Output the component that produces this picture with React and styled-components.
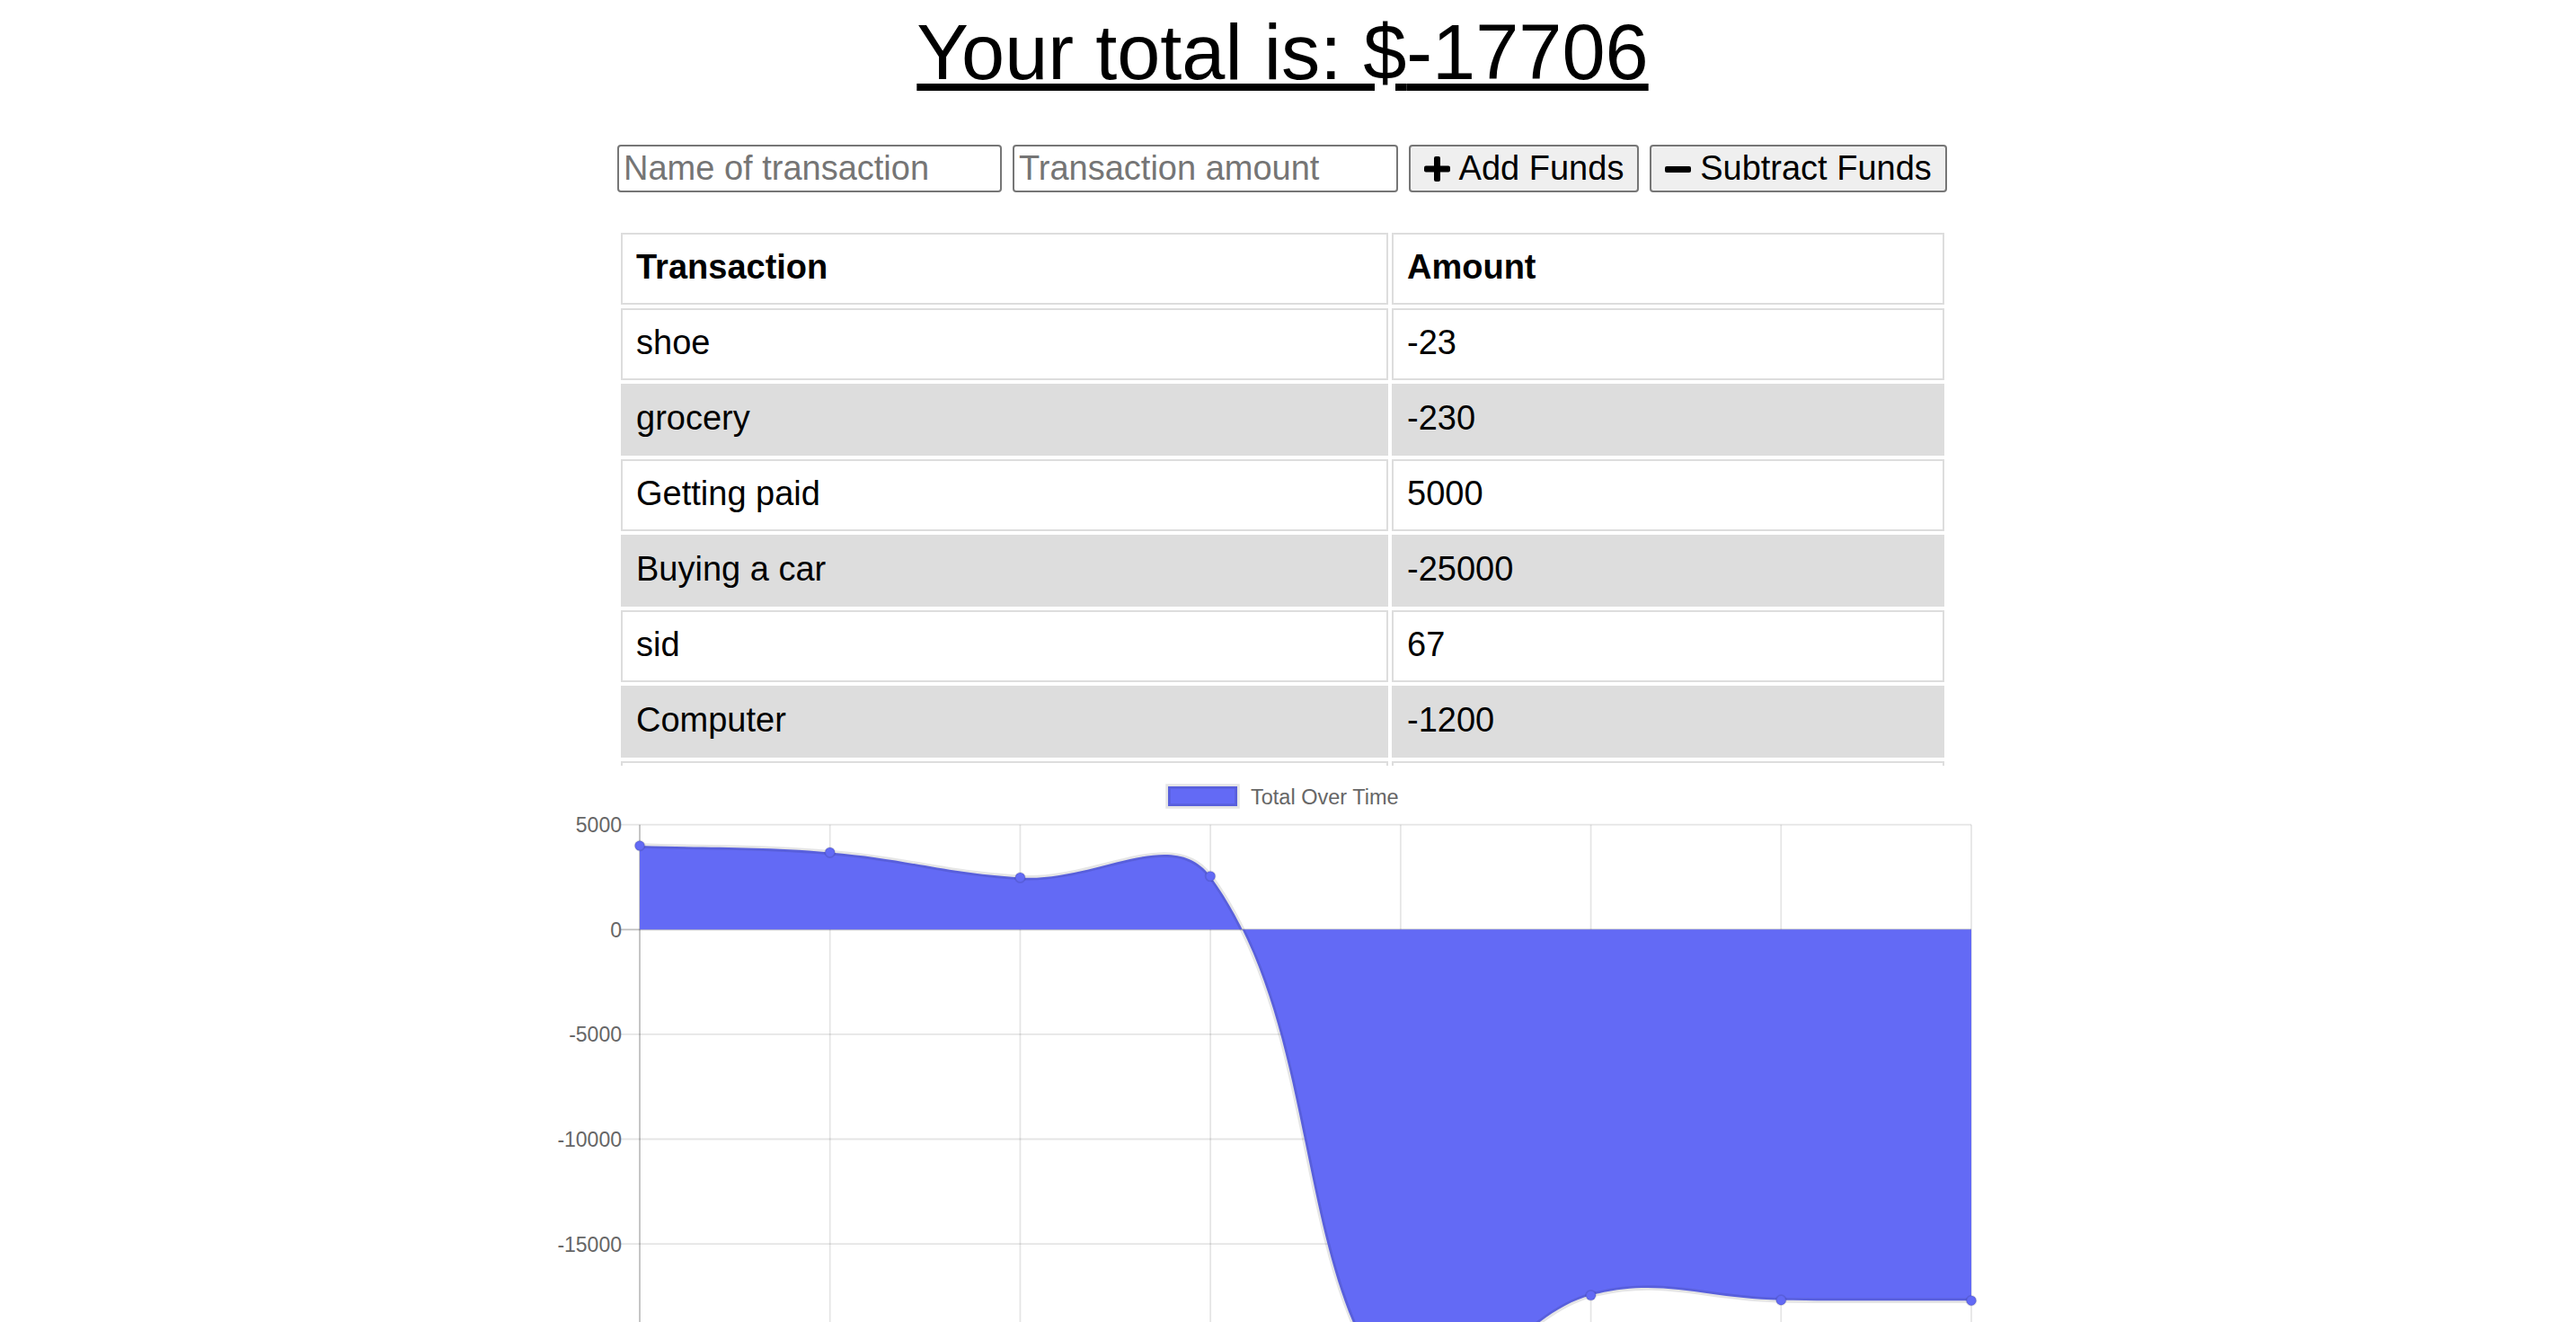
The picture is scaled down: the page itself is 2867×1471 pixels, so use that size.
import React from 'react'
import styled, { createGlobalStyle } from 'styled-components'

const GlobalStyle = createGlobalStyle`
  html,
  body {
    margin: 0;
    padding: 0;
    background: #fff;
  }
  body {
    font-family: "Liberation Sans", Arial, Helvetica, sans-serif;
    color: #000;
  }
`

const Page = styled.div`
  height: 100vh;
  overflow: hidden;
  box-sizing: border-box;
  /* the original had a scrollbar, so everything sits a bit left of centre */
  padding: 9px 12px 0 0;
  display: flex;
  flex-direction: column;
  align-items: center;
`
const Total = styled.h1`
  margin: 0;
  font-size: 86.5px;
  font-weight: normal;
  line-height: 98px;
  text-decoration: underline;
  white-space: nowrap;
`
const Form = styled.div`
  margin-top: 54px;
  width: 1481px;
  display: flex;
  gap: 12px;
  flex-shrink: 0;
`
const Field = styled.input`
  box-sizing: border-box;
  width: ${props => props.$w}px;
  height: 53px;
  margin: 0;
  padding: 0 5px;
  border: 2px solid #767676;
  border-radius: 4px;
  background: #fff;
  font: 38px "Liberation Sans", Arial, sans-serif;
  color: #000;
  outline: none;
  &::placeholder {
    color: #757575;
  }
`
const FundButton = styled.button`
  box-sizing: border-box;
  width: ${props => props.$w}px;
  height: 53px;
  margin: 0;
  padding: 0;
  display: flex;
  align-items: center;
  justify-content: center;
  gap: 10px;
  background: #efefef;
  border: 2px solid #767676;
  border-radius: 4px;
  font: 38px "Liberation Sans", Arial, sans-serif;
  color: #000;
  white-space: nowrap;
  svg {
    display: block;
    flex-shrink: 0;
  }
`
const TableWrap = styled.div`
  margin-top: 41px;
  width: 1481px;
  height: 597px;
  overflow: hidden;
  flex-shrink: 0;
`
const Table = styled.table`
  width: 100%;
  table-layout: fixed;
  border-collapse: separate;
  border-spacing: 4px;
  text-align: left;
  font-size: 38px;
`
const Row = styled.tr`
  &:nth-child(even) > td {
    background: #ddd;
  }
`
const Cell = styled.td`
  box-sizing: border-box;
  padding: 0 15px 3px;
  border: 2px solid #ddd;
  line-height: 73px;
  white-space: nowrap;
  font-weight: ${props => (props.$head ? 'bold' : 'normal')};
`
const ChartSvg = styled.svg`
  display: block;
  flex-shrink: 0;
  width: 1735px;
  height: 820px;
  font-family: "Liberation Sans", Arial, Helvetica, sans-serif;
`
const ChartText = styled.text`
  font-size: ${props => props.$size || 23}px;
  fill: #666;
`

const FILL = '#636af5'
const LINE = 'rgba(0, 0, 0, 0.1)'

const transactions = [
  { name: 'shoe', value: -23 },
  { name: 'grocery', value: -230 },
  { name: 'Getting paid', value: 5000 },
  { name: 'Buying a car', value: -25000 },
  { name: 'sid', value: 67 },
  { name: 'Computer', value: -1200 },
  { name: 'coffee', value: -320 },
  { name: 'paycheck', value: 4000 },
]

const total = transactions.reduce((s, t) => s + t.value, 0)

// chart area in page pixels
const area = { left: 712, right: 2194, top: 917.7, zero: 1034.3, step: 116.6 }
const yOf = v => area.zero - (v / 5000) * area.step
area.bottom = yOf(-25000)
const ticks = [5000, 0, -5000, -10000, -15000, -20000, -25000]

let running = 0
const sums = [...transactions].reverse().map(t => (running += t.value))
const dx = (area.right - area.left) / (sums.length - 1)
const points = sums.map((v, i) => ({ x: area.left + dx * i, y: yOf(v) }))

const clamp = p => ({
  x: Math.min(Math.max(p.x, area.left), area.right),
  y: Math.min(Math.max(p.y, area.top), area.bottom),
})

// same spline as chart.js (tension 0.4)
const controls = points.map((p, i) => {
  const a = points[i - 1] || p
  const b = points[i + 1] || p
  const d01 = Math.hypot(p.x - a.x, p.y - a.y)
  const d12 = Math.hypot(b.x - p.x, b.y - p.y)
  const s01 = d01 + d12 ? d01 / (d01 + d12) : 0
  const s12 = d01 + d12 ? d12 / (d01 + d12) : 0
  const fa = 0.4 * s01
  const fb = 0.4 * s12
  return {
    prev: clamp({ x: p.x - fa * (b.x - a.x), y: p.y - fa * (b.y - a.y) }),
    next: clamp({ x: p.x + fb * (b.x - a.x), y: p.y + fb * (b.y - a.y) }),
  }
})

let linePath = `M${points[0].x},${points[0].y}`
for (let i = 1; i < points.length; i++) {
  const c1 = controls[i - 1].next
  const c2 = controls[i].prev
  const p = points[i]
  linePath += ` C${c1.x},${c1.y} ${c2.x},${c2.y} ${p.x},${p.y}`
}
const last = points[points.length - 1]
const fillPath = `${linePath} L${last.x},${area.zero} L${points[0].x},${area.zero} Z`

const PlusIcon = () => (
  <svg width="29" height="28" viewBox="0 0 29 28">
    <rect x="11" y="0" width="7" height="28" rx="2" fill="#000" />
    <rect x="0" y="10.5" width="29" height="7" rx="2" fill="#000" />
  </svg>
)

const MinusIcon = () => (
  <svg width="29" height="28" viewBox="0 0 29 28">
    <rect x="0" y="11" width="29" height="7" rx="2" fill="#000" />
  </svg>
)

const Chart = () => (
  <ChartSvg viewBox="560 852 1735 820">
    {points.map((p, i) => (
      <line
        key={'v' + i}
        x1={p.x}
        x2={p.x}
        y1={area.top}
        y2={area.bottom + 18}
        stroke={i === 0 ? 'rgba(0,0,0,0.25)' : LINE}
        strokeWidth="1.8"
      />
    ))}
    {ticks.map(v => (
      <g key={'h' + v}>
        <line
          x1={area.left - 21}
          x2={area.right}
          y1={yOf(v)}
          y2={yOf(v)}
          stroke={v === 0 ? 'rgba(0,0,0,0.25)' : LINE}
          strokeWidth="1.8"
        />
        <ChartText x="692" y={yOf(v) + 8.5} textAnchor="end">
          {v}
        </ChartText>
      </g>
    ))}
    <path d={fillPath} fill={FILL} />
    <path d={linePath} fill="none" stroke={LINE} strokeWidth="5.5" />
    {points.map((p, i) => (
      <circle key={'p' + i} cx={p.x} cy={p.y} r="5.5" fill={FILL} stroke={LINE} strokeWidth="1.8" />
    ))}
    <rect x="1300" y="875" width="77" height="22" fill={FILL} stroke={LINE} strokeWidth="5.5" />
    <ChartText x="1392" y="894.5" $size={23.5}>
      Total Over Time
    </ChartText>
  </ChartSvg>
)

const App = () => (
  <Page>
    <GlobalStyle />
    <Total>Your total is: ${total}</Total>
    <Form>
      <Field $w={428} type="text" placeholder="Name of transaction" />
      <Field $w={429} type="number" placeholder="Transaction amount" />
      <FundButton $w={256}>
        <PlusIcon />
        Add Funds
      </FundButton>
      <FundButton $w={331}>
        <MinusIcon />
        Subtract Funds
      </FundButton>
    </Form>
    <TableWrap>
      <Table>
        <colgroup>
          <col style={{ width: 854 }} />
          <col />
        </colgroup>
        <thead>
          <tr>
            <Cell as="th" $head>Transaction</Cell>
            <Cell as="th" $head>Amount</Cell>
          </tr>
        </thead>
        <tbody>
          {transactions.map(t => (
            <Row key={t.name}>
              <Cell>{t.name}</Cell>
              <Cell>{t.value}</Cell>
            </Row>
          ))}
        </tbody>
      </Table>
    </TableWrap>
    <Chart />
  </Page>
)

export default App
